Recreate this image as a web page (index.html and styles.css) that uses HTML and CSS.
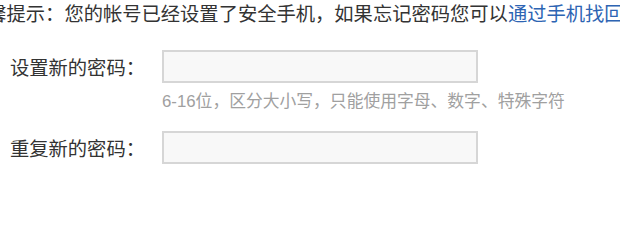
FILE: index.html
```html
<!DOCTYPE html>
<html lang="zh-CN">
<head>
<meta charset="utf-8">
<title>设置新密码</title>
<link rel="stylesheet" href="styles.css">
</head>
<body>
<div class="page">
  <p class="tip">温馨提示：您的帐号已经设置了安全手机，如果忘记密码您可以<a class="link" href="#">通过手机找回密码</a>。</p>
  <form class="form">
    <div class="row">
      <label class="label" for="pwd">设置新的密码：</label>
      <div class="field">
        <input class="input" id="pwd" type="password">
        <div class="hint"><span class="num">6-16</span>位，区分大小写，只能使用字母、数字、特殊字符</div>
      </div>
    </div>
    <div class="row row-second">
      <label class="label" for="pwd2">重复新的密码：</label>
      <div class="field">
        <input class="input" id="pwd2" type="password">
      </div>
    </div>
  </form>
</div>
</body>
</html>
```
FILE: styles.css
```css
html, body {
  margin: 0;
  padding: 0;
  background: #ffffff;
}
.page {
  width: 620px;
  height: 204px;
  overflow: hidden;
  font-family: "Noto Sans CJK SC", "Liberation Sans", sans-serif;
  color: #333333;
}
.tip {
  margin: 0 0 0 -32px;
  padding-top: 0;
  font-size: 19.3px;
  line-height: 27px;
  white-space: nowrap;
}
.link {
  color: #2d64b3;
  text-decoration: none;
}
.form {
  margin: 23px 0 0 0;
}
.row {
  display: flex;
  align-items: flex-start;
}
.row-second {
  margin-top: 18px;
}
.label {
  width: 152px;
  padding-left: 10px;
  font-size: 19.3px;
  line-height: 33px;
  padding-top: 1px;
  color: #333333;
}
.field {
  display: flex;
  flex-direction: column;
}
.input {
  box-sizing: border-box;
  width: 316px;
  height: 33px;
  margin: 0;
  padding: 0 6px;
  border: 2px solid #d6d6d6;
  background: #f8f8f8;
  outline: none;
}
.hint {
  margin-top: 6px;
  font-size: 16.8px;
  line-height: 22px;
  color: #a0a0a0;
  white-space: nowrap;
}
.num {
  font-family: "Liberation Sans", sans-serif;
}
```
